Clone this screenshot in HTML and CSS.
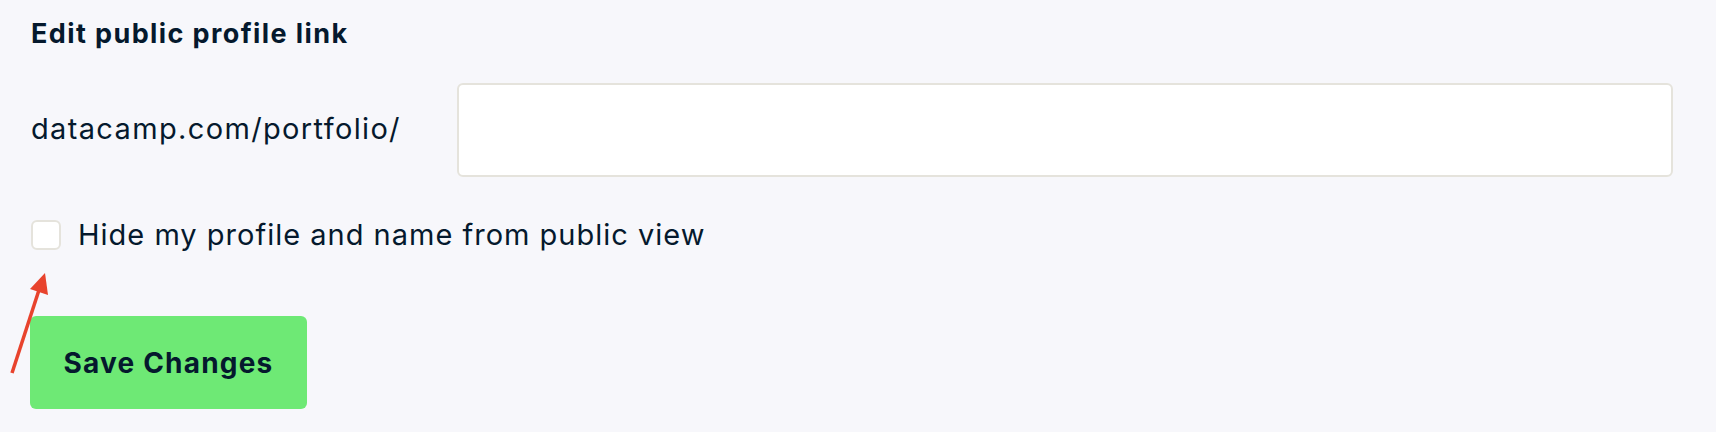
FILE: index.html
```html
<!DOCTYPE html>
<html lang="en">
<head>
<meta charset="utf-8">
<title>Edit public profile link</title>
<link rel="stylesheet" href="styles.css">
</head>
<body>
<main class="panel">
  <h2 class="title">Edit public profile link</h2>
  <div class="link-row">
    <label class="link-prefix" for="slug">datacamp.com/portfolio/</label>
    <input class="link-input" id="slug" type="text">
  </div>
  <label class="check-row">
    <span class="check-box"></span>
    <span class="check-text">Hide my profile and name from public view</span>
  </label>
  <button class="save-btn" type="button">Save Changes</button>
  <svg class="arrow" width="60" height="120" viewBox="0 0 60 120" aria-hidden="true">
    <line x1="12" y1="113" x2="39" y2="30" stroke="#e8432d" stroke-width="3.5" stroke-linecap="butt"/>
    <polygon points="45,13 30,29 48,35" fill="#e8432d"/>
  </svg>
</main>
</body>
</html>
```
FILE: styles.css
```css
* { box-sizing: border-box; }
html, body { margin: 0; padding: 0; }
body {
  background: #f7f7fb;
  color: #05192d;
  font-family: Inter, "Noto Sans", sans-serif;
  width: 1716px;
  height: 432px;
  overflow: hidden;
}
.panel {
  position: relative;
  padding: 17px 43px 0 31px;
  display: flex;
  flex-direction: column;
  align-items: flex-start;
}
.title {
  margin: 0;
  font-size: 27px;
  font-weight: 700;
  line-height: 34px;
  letter-spacing: 1.4px;
}
.link-row {
  margin-top: 32px;
  display: flex;
  align-items: center;
  width: 100%;
}
.link-prefix {
  width: 426px;
  flex: none;
  font-size: 29px;
  letter-spacing: 1.35px;
  padding-bottom: 4px;
}
.link-input {
  flex: 1;
  height: 94px;
  background: #fff;
  border: 2.5px solid #e5e3dc;
  border-radius: 6px;
  outline: none;
  font: inherit;
}
.check-row {
  margin-top: 40px;
  display: flex;
  align-items: center;
  gap: 17px;
}
.check-box {
  width: 30px;
  height: 30px;
  background: #fff;
  border: 2.5px solid #e5e3dc;
  border-radius: 6px;
}
.check-text {
  font-size: 29px;
  letter-spacing: 1px;
}
.save-btn {
  margin-top: 64px;
  width: 277px;
  height: 93px;
  margin-left: -1px;
  background: #6ee975;
  border: none;
  border-radius: 6px;
  color: #05192d;
  font-family: inherit;
  font-size: 28px;
  font-weight: 700;
  letter-spacing: 1.2px;
  padding: 0;
}
.arrow {
  position: absolute;
  left: 0;
  top: 260px;
}
```
